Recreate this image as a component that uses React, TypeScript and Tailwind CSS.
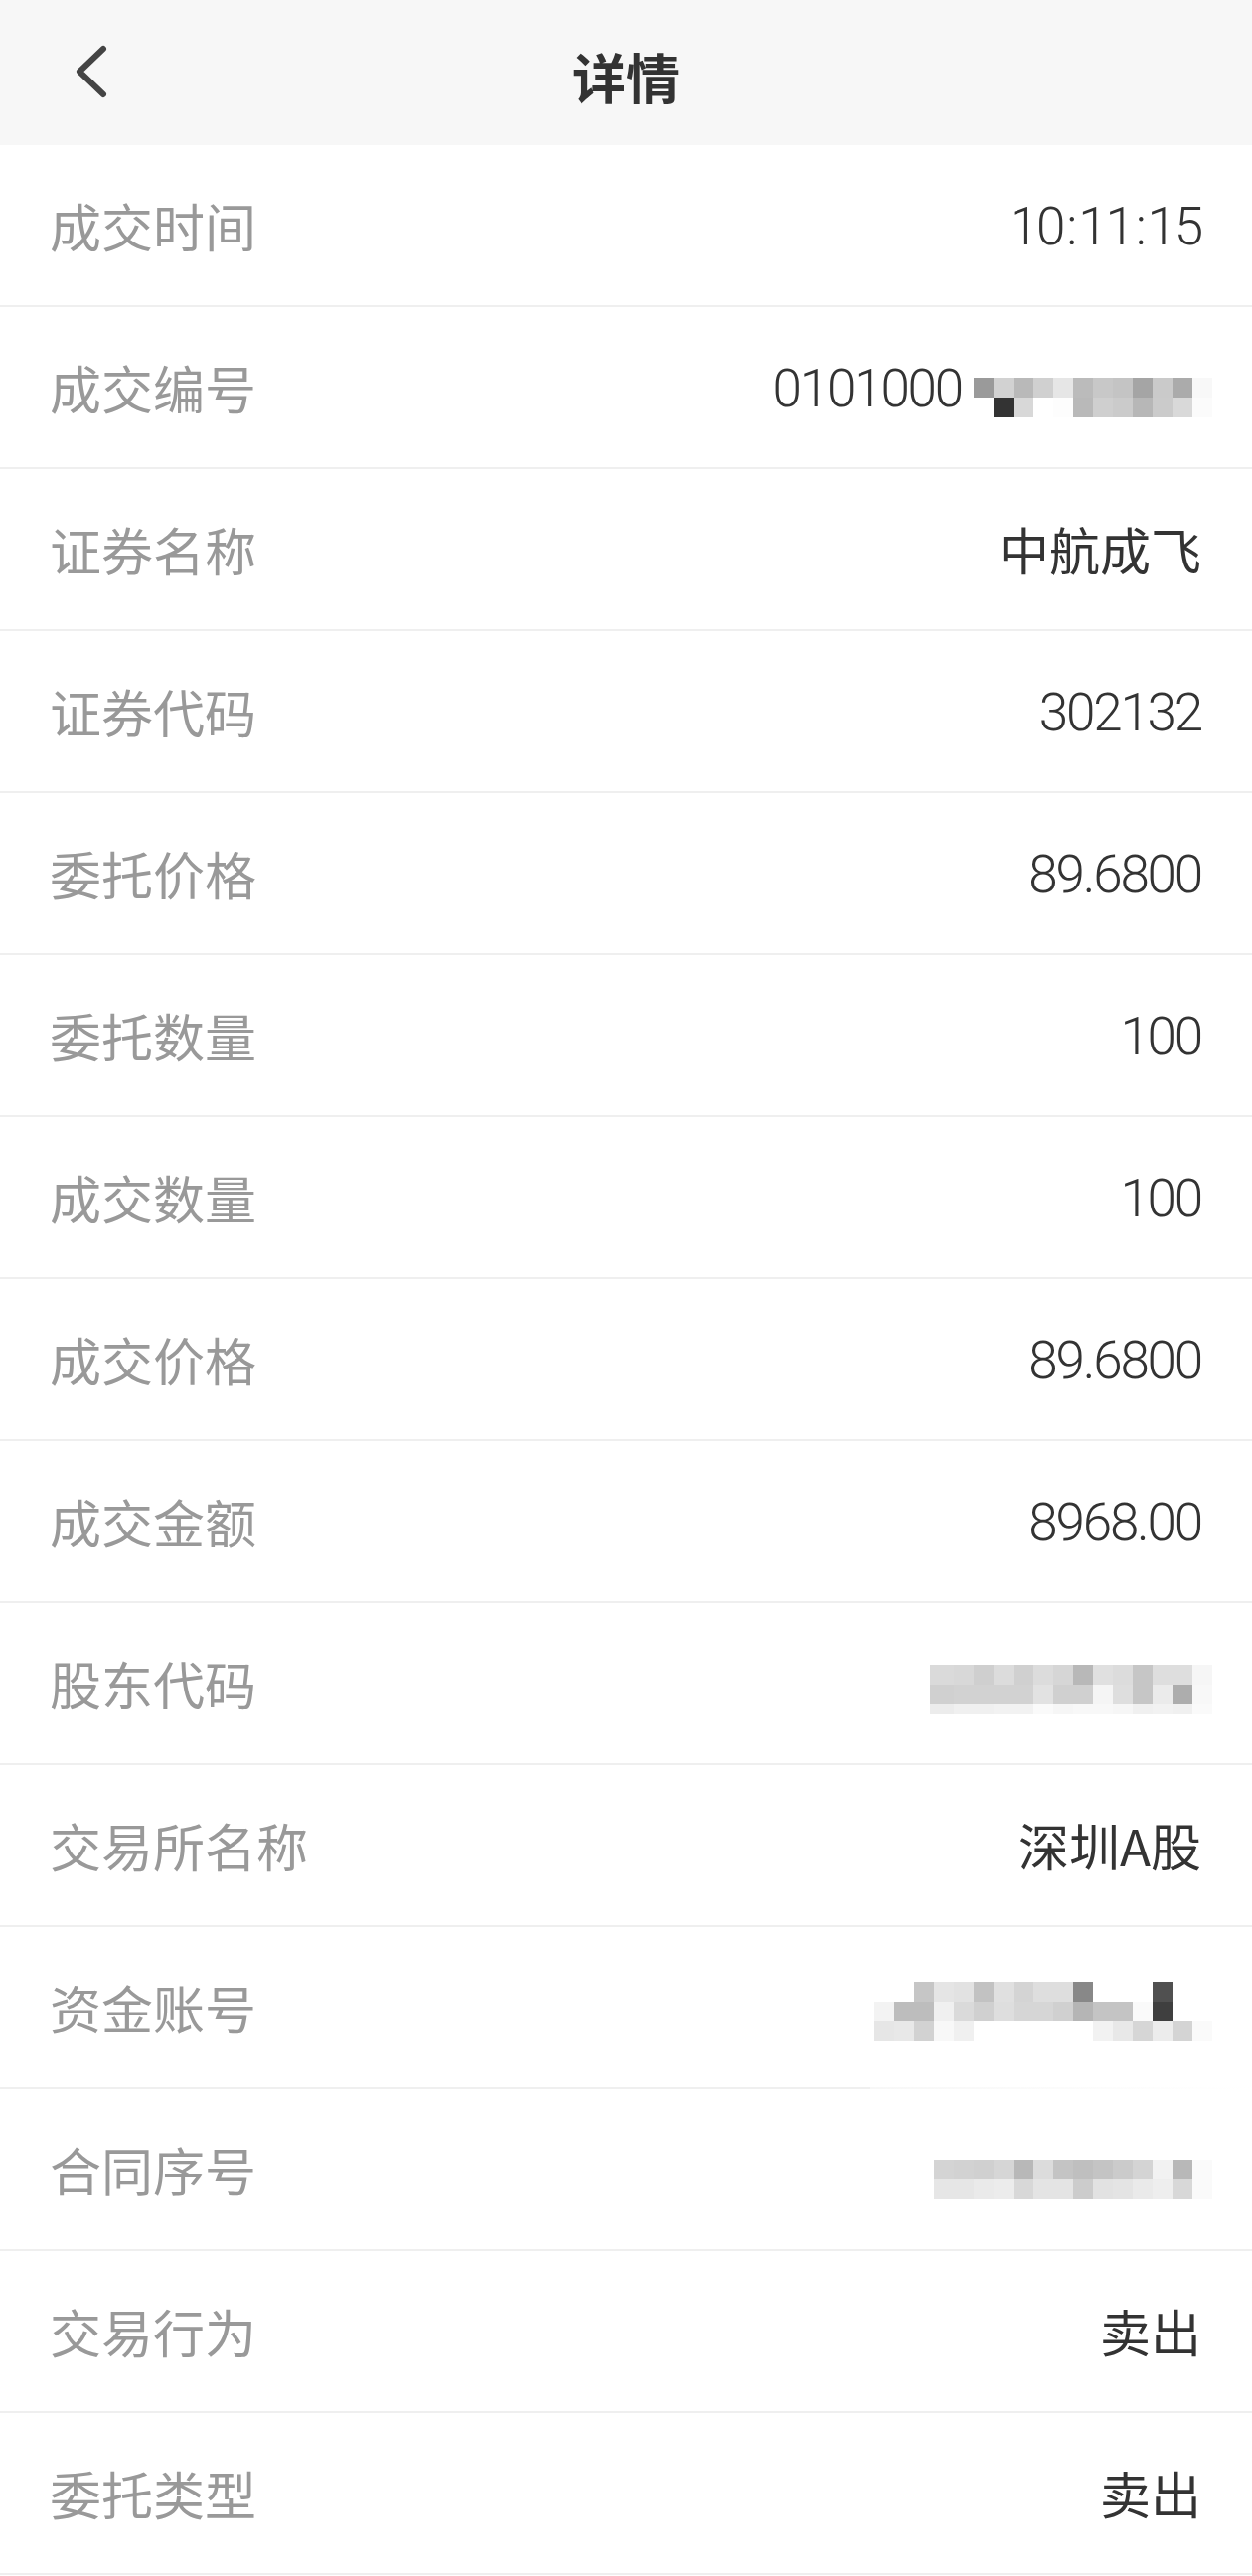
import React from "react";

type Cell = { w?: number; c: string };
type MosaicRow = { h: number; cells: Cell[] };

const W = "#ffffff";

function row(h: number, colors: string[], widths?: number[]): MosaicRow {
  return { h, cells: colors.map((c, i) => ({ c, w: widths ? widths[i] : 20 })) };
}

const mosaicNo: MosaicRow[] = [
  row(20, ["#9a9a9a", "#d2d2d2", "#b9b9b9", "#d0d0d0", "#e6e6e6", "#bbbbbb", "#c8c8c8", "#c4c4c4", "#a5a5a5", "#cacaca", "#ababab", "#f8f8f8"]),
  row(20, [W, "#333333", "#d8d8d8", W, "#fdfdfd", "#b9b9b9", "#cfcfcf", "#cbcbcb", "#b7b7b7", "#cbcbcb", "#d9d9d9", "#fbfbfb"]),
];

const w14 = [24, 20, 20, 20, 20, 20, 20, 20, 20, 20, 20, 20, 20, 20];
const mosaicHolder: MosaicRow[] = [
  row(20, ["#dadada", "#d8d8d8", "#cfcfcf", "#dcdcdc", "#d0d0d0", "#dcdcdc", "#d6d6d6", "#b8b8b8", "#e0e0e0", "#dcdcdc", "#c6c6c6", "#dedede", "#dedede", "#f6f6f6"], w14),
  row(20, ["#d0d0d0", "#d2d2d2", "#d2d2d2", "#d2d2d2", "#d2d2d2", "#e2e2e2", "#d0d0d0", "#d0d0d0", "#f5f5f5", "#dedede", "#c6c6c6", "#ebebeb", "#adadad", "#f8f8f8"], w14),
  row(10, ["#ececec", "#f0f0f0", "#f0f0f0", "#f2f2f2", "#f2f2f2", "#fafafa", "#f6f6f6", "#f8f8f8", "#f8f8f8", "#f6f6f6", "#f0f0f0", "#f2f2f2", "#f0f0f0", "#fafafa"], w14),
];

const mosaicAccount: MosaicRow[] = [
  row(20, [W, W, "#c6c6c6", "#e5e5e5", "#e2e2e2", "#c2c2c2", "#e0e0e0", "#d4d4d4", "#dedede", "#dedede", "#888888", W, W, W, "#505050", W, W]),
  row(20, ["#f3f3f3", "#bdbdbd", "#bdbdbd", "#f0f0f0", "#dadada", "#d0d0d0", "#dedede", "#d6d6d6", "#d6d6d6", "#d0d0d0", "#b5b5b5", "#c4c4c4", "#c4c4c4", "#fafafa", "#3f3f3f", W, W]),
  row(20, ["#e6e6e6", "#e8e8e8", "#d2d2d2", "#f8f8f8", "#f0f0f0", W, W, W, W, W, W, "#f2f2f2", "#e8e8e8", "#d6d6d6", "#ececec", "#d4d4d4", "#fafafa"]),
];

const mosaicContract: MosaicRow[] = [
  row(20, ["#d4d4d4", "#d2d2d2", "#d0d0d0", "#d6d6d6", "#b8b8b8", "#dcdcdc", "#c4c4c4", "#bfbfbf", "#c4c4c4", "#cbcbcb", "#d4d4d4", "#f2f2f2", "#b8b8b8", "#fafafa"]),
  row(20, ["#e6e6e6", "#e6e6e6", "#eaeaea", "#ececec", "#d8d8d8", "#e4e4e4", "#e4e4e4", "#cccccc", "#e2e2e2", "#e4e4e4", "#eaeaea", "#eeeeee", "#d8d8d8", "#fafafa"]),
];

function Mosaic({ rows }: { rows: MosaicRow[] }) {
  return (
    <div className="flex flex-col">
      {rows.map((r, i) => (
        <div key={i} className="flex" style={{ height: r.h }}>
          {r.cells.map((c, j) => (
            <div key={j} style={{ width: c.w, height: r.h, backgroundColor: c.c }} />
          ))}
        </div>
      ))}
    </div>
  );
}

const cjk = "font-['Noto_Sans_CJK_SC',sans-serif]";
const num = "font-['Roboto','Noto_Sans_CJK_SC',sans-serif] font-light tracking-[-2.2px] text-[53px]";

function Row({ label, children, noBorder }: { label: string; children: React.ReactNode; noBorder?: boolean }) {
  return (
    <div
      className={
        "relative h-[163px] flex items-center justify-between pl-[50px] pr-[51px] " +
        (noBorder ? "" : "border-b-2 border-[#efefef]")
      }
    >
      <span className={`${cjk} text-[52px] leading-none text-[#999999]`}>{label}</span>
      <div className="flex items-center text-[#333333]">{children}</div>
    </div>
  );
}

function NumVal({ v }: { v: string }) {
  const parts = v.split(":");
  return (
    <span className={`${num} leading-none mt-[3px]`}>
      {parts.map((p, i) => (
        <React.Fragment key={i}>
          {i > 0 && <span className="mx-[3px]">:</span>}
          {p}
        </React.Fragment>
      ))}
    </span>
  );
}

function CjkVal({ v }: { v: string }) {
  return <span className={`${cjk} text-[51px] leading-none`}>{v}</span>;
}

export default function App() {
  return (
    <div className="w-[1260px] min-h-[2592px] bg-white">
      <div className="h-[146px] bg-[#f7f7f7] grid grid-cols-[1fr_auto_1fr] items-center">
        <div className="pl-[72px] flex items-center">
          <svg width="40" height="60" viewBox="0 0 40 60" fill="none">
            <path d="M32 6 L8 29 L32 52" stroke="#444444" strokeWidth="6" strokeLinecap="round" strokeLinejoin="round" />
          </svg>
        </div>
        <div className={`${cjk} font-bold text-[54px] leading-none text-[#333333] pt-[8px]`}>详情</div>
        <div />
      </div>

      <Row label="成交时间">
        <NumVal v="10:11:15" />
      </Row>
      <Row label="成交编号">
        <NumVal v="0101000" />
        <div className="ml-[12px] mt-[20px] -mr-[11px]">
          <Mosaic rows={mosaicNo} />
        </div>
      </Row>
      <Row label="证券名称">
        <CjkVal v="中航成飞" />
      </Row>
      <Row label="证券代码">
        <NumVal v="302132" />
      </Row>
      <Row label="委托价格">
        <NumVal v="89.6800" />
      </Row>
      <Row label="委托数量">
        <NumVal v="100" />
      </Row>
      <Row label="成交数量">
        <NumVal v="100" />
      </Row>
      <Row label="成交价格">
        <NumVal v="89.6800" />
      </Row>
      <Row label="成交金额">
        <NumVal v="8968.00" />
      </Row>
      <Row label="股东代码">
        <div className="mt-[12px] -mr-[11px]">
          <Mosaic rows={mosaicHolder} />
        </div>
      </Row>
      <Row label="交易所名称">
        <CjkVal v="深圳A股" />
      </Row>
      <Row label="资金账号">
        <div className="mt-[8px] -mr-[11px]">
          <Mosaic rows={mosaicAccount} />
        </div>
        <div className="absolute right-0 bottom-[-2px] h-[2px] w-[384px] bg-gradient-to-r from-[#f7f7f7] to-white" />
      </Row>
      <Row label="合同序号">
        <div className="mt-[20px] -mr-[11px]">
          <Mosaic rows={mosaicContract} />
        </div>
      </Row>
      <Row label="交易行为">
        <CjkVal v="卖出" />
      </Row>
      <Row label="委托类型">
        <CjkVal v="卖出" />
      </Row>
    </div>
  );
}
